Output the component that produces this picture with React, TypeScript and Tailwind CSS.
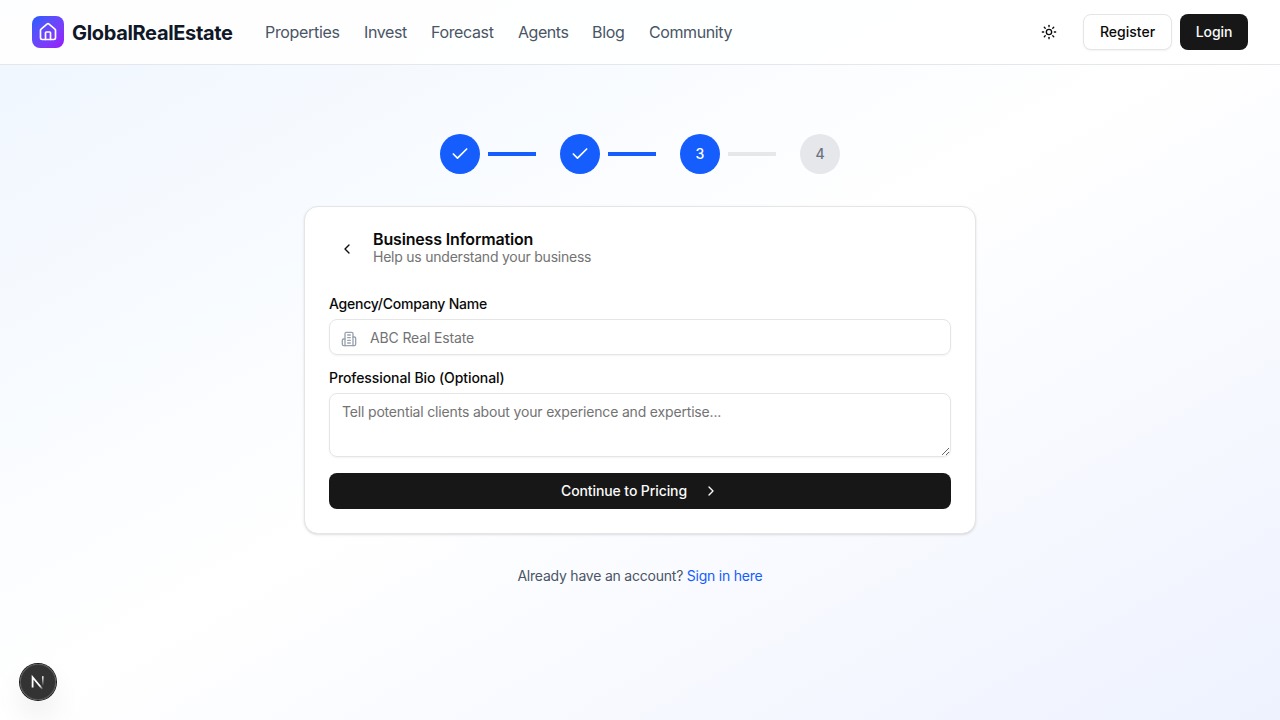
import { Check, ChevronLeft, ChevronRight, House, Sun } from "lucide-react";

const navItems = [
  { label: "Properties", style: "w-[75px] tracking-[-0.33px]" },
  { label: "Invest", style: "w-[43px] tracking-[-0.4px]" },
  { label: "Forecast", style: "w-[63px] tracking-[-0.36px]" },
  { label: "Agents", style: "w-[50px] tracking-[-0.45px]" },
  { label: "Blog", style: "w-[33px] tracking-[-0.3px]" },
  { label: "Community", style: "w-[83px] tracking-[-0.4px]" },
];

const steps = [1, 2, 3, 4];
const currentStep = 3;

function BuildingIcon({ className }: { className?: string }) {
  return (
    <svg
      viewBox="0 0 24 24"
      fill="none"
      stroke="currentColor"
      strokeWidth="2"
      strokeLinecap="round"
      strokeLinejoin="round"
      className={className}
    >
      <path d="M6 22V4a2 2 0 0 1 2-2h8a2 2 0 0 1 2 2v18Z" />
      <path d="M6 12H4a2 2 0 0 0-2 2v6a2 2 0 0 0 2 2h2" />
      <path d="M18 9h2a2 2 0 0 1 2 2v9a2 2 0 0 1-2 2h-2" />
      <path d="M10 6h4" />
      <path d="M10 10h4" />
      <path d="M10 14h4" />
      <path d="M10 18h4" />
    </svg>
  );
}

function Header() {
  return (
    <header className="flex h-[65px] items-center border-b border-gray-200 bg-white/90 px-8">
      <a href="#" className="flex items-center gap-2">
        <span className="flex size-8 items-center justify-center rounded-lg bg-gradient-to-br from-[#155dfc] to-[#9810fa]">
          <House className="size-5 text-white" />
        </span>
        <span className="w-[161px] pt-px whitespace-nowrap text-xl font-bold tracking-[-0.33px] text-gray-900">
          GlobalRealEstate
        </span>
      </a>
      <nav className="ml-8 flex items-center gap-6">
        {navItems.map((item) => (
          <a key={item.label} href="#" className={`${item.style} whitespace-nowrap text-base text-gray-600`}>
            {item.label}
          </a>
        ))}
      </nav>
      <div className="ml-auto flex items-center gap-2">
        <button aria-label="Toggle theme" className="mr-2 flex size-9 items-center justify-center rounded-lg text-neutral-950">
          <Sun className="size-4" />
        </button>
        <button className="h-9 w-[89px] rounded-lg border border-neutral-200 bg-white text-sm font-medium text-neutral-950 shadow-xs">
          Register
        </button>
        <button className="h-9 w-[68px] rounded-lg bg-neutral-900 text-sm font-medium tracking-[-0.1px] text-neutral-50">
          Login
        </button>
      </div>
    </header>
  );
}

function Stepper() {
  return (
    <div className="flex items-center justify-center gap-6">
      {steps.map((step) => (
        <div key={step} className="flex items-center gap-2">
          <div
            className={`flex size-10 items-center justify-center rounded-full text-sm font-medium ${
              step <= currentStep ? "bg-[#155dfc] text-white" : "bg-gray-200 text-gray-500"
            }`}
          >
            {step < currentStep ? <Check className="size-5" /> : step}
          </div>
          {step < steps.length && (
            <div className={`h-1 w-12 ${step < currentStep ? "bg-[#155dfc]" : "bg-gray-200"}`} />
          )}
        </div>
      ))}
    </div>
  );
}

function BusinessCard() {
  return (
    <section className="mt-8 w-full rounded-[14px] border border-neutral-200 bg-white p-6 text-neutral-950 shadow-sm">
      <div className="flex items-center gap-2">
        <button aria-label="Back" className="flex h-8 w-9 items-center justify-center rounded-lg">
          <ChevronLeft className="size-4" />
        </button>
        <div>
          <h1 className="text-base leading-none font-semibold tracking-[-0.16px]">Business Information</h1>
          <p className="text-sm tracking-[-0.23px] text-neutral-500">Help us understand your business</p>
        </div>
      </div>
      <form className="mt-[30px] flex flex-col gap-4" onSubmit={(e) => e.preventDefault()}>
        <div className="flex flex-col gap-2">
          <label htmlFor="company" className="text-sm leading-none font-medium tracking-[-0.24px]">
            Agency/Company Name
          </label>
          <div className="relative flex">
            <BuildingIcon className="absolute top-3 left-3 size-4 text-gray-400" />
            <input
              id="company"
              placeholder="ABC Real Estate"
              className="h-9 w-full rounded-lg border border-neutral-200 pr-3 pl-10 text-sm tracking-[-0.14px] shadow-xs outline-none placeholder:text-neutral-500"
            />
          </div>
        </div>
        <div className="flex flex-col gap-2">
          <label htmlFor="bio" className="text-sm leading-none font-medium tracking-[-0.08px]">
            Professional Bio (Optional)
          </label>
          <textarea
            id="bio"
            placeholder="Tell potential clients about your experience and expertise..."
            className="block h-16 w-full rounded-lg border border-neutral-200 px-3 py-2 text-sm tracking-[-0.17px] shadow-xs outline-none placeholder:text-neutral-500"
          />
        </div>
        <button className="flex h-9 items-center justify-center gap-4 rounded-lg bg-neutral-900 text-sm font-medium tracking-[-0.1px] text-neutral-50">
          Continue to Pricing
          <ChevronRight className="size-4" />
        </button>
      </form>
    </section>
  );
}

export default function App() {
  return (
    <div className="relative h-screen overflow-hidden bg-gradient-to-br from-blue-50 via-white to-indigo-50 font-['Inter','Liberation_Sans',sans-serif]">
      <Header />
      <main className="flex flex-col items-center pt-[69px]">
        <div className="w-[672px]">
          <Stepper />
          <BusinessCard />
          <p className="mt-8 text-center text-sm tracking-[-0.22px] text-gray-600">
            Already have an account?{" "}
            <a href="#" className="text-[#155dfc]">
              Sign in here
            </a>
          </p>
        </div>
      </main>
      <button
        aria-label="Open developer tools"
        className="absolute bottom-5 left-5 flex size-9 items-center justify-center rounded-full bg-black/80 shadow-[0_0_0_1px_#171717,inset_0_0_0_1px_rgba(255,255,255,0.14),0_16px_32px_-8px_rgba(0,0,0,0.24)]"
      >
        <svg width="40" height="40" viewBox="0 0 40 40" fill="none" className="shrink-0">
          <defs>
            <linearGradient id="diag" x1="18" y1="17" x2="25.5" y2="27" gradientUnits="userSpaceOnUse">
              <stop offset="0.6" stopColor="white" />
              <stop offset="1" stopColor="white" stopOpacity="0" />
            </linearGradient>
            <linearGradient id="stem" x1="25" y1="14" x2="25" y2="24" gradientUnits="userSpaceOnUse">
              <stop stopColor="white" />
              <stop offset="1" stopColor="white" stopOpacity="0" />
            </linearGradient>
          </defs>
          <path d="M14.6 25.5V15.2L24.4 27" stroke="url(#diag)" strokeWidth="1.8" />
          <path d="M24.8 14.2V24" stroke="url(#stem)" strokeWidth="1.6" />
        </svg>
      </button>
    </div>
  );
}
